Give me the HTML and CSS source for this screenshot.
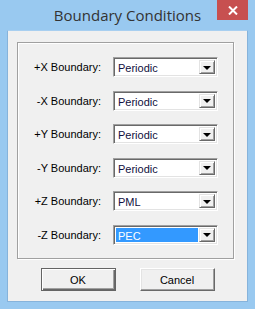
FILE: index.html
```html
<!DOCTYPE html>
<html lang="en">
<head>
    <meta charset="UTF-8">
    <title>Boundary Conditions</title>
    <link rel="stylesheet" href="styles.css">
</head>
<body>
    <div class="window">
        <div class="titlebar">
            <span></span>
            <span class="title">Boundary Conditions</span>
            <button class="close">
                <svg width="10" height="9" viewBox="0 0 10 9"><path d="M1 0.5 L9 8.5 M9 0.5 L1 8.5" stroke="#fff" stroke-width="2"/></svg>
            </button>
        </div>
        <div class="client">
            <div class="group">
                <label>+X Boundary:</label>
                <div class="combo"><span class="value">Periodic</span><span class="drop"><i></i></span></div>
                <label>-X Boundary:</label>
                <div class="combo"><span class="value">Periodic</span><span class="drop"><i></i></span></div>
                <label>+Y Boundary:</label>
                <div class="combo"><span class="value">Periodic</span><span class="drop"><i></i></span></div>
                <label>-Y Boundary:</label>
                <div class="combo"><span class="value">Periodic</span><span class="drop"><i></i></span></div>
                <label>+Z Boundary:</label>
                <div class="combo"><span class="value">PML</span><span class="drop"><i></i></span></div>
                <label>-Z Boundary:</label>
                <div class="combo"><span class="value selected">PEC</span><span class="drop"><i></i></span></div>
            </div>
            <div class="buttons">
                <button class="btn default">OK</button>
                <button class="btn">Cancel</button>
            </div>
        </div>
    </div>
</body>
</html>
```

FILE: styles.css
```css
body {
    margin: 0;
    font-family: 'Liberation Sans', Arial, sans-serif;
    font-size: 11px;
    color: #000;
}
.window {
    width: 255px;
    height: 309px;
    box-sizing: border-box;
    background-color: #99c9f0;
    padding: 0 7px 7px 7px;
    display: flex;
    flex-direction: column;
}
.titlebar {
    height: 30px;
    display: grid;
    grid-template-columns: 1fr auto 1fr;
    align-items: start;
}
.title {
    font-family: 'Open Sans', 'Noto Sans', sans-serif;
    font-size: 15px;
    color: #333;
    line-height: 15px;
    padding-top: 8px;
}
.close {
    justify-self: end;
    width: 31px;
    height: 20px;
    margin: 0;
    padding: 0;
    border: none;
    background-color: #c75050;
    display: flex;
    align-items: center;
    justify-content: center;
}
.client {
    flex: 1;
    background-color: #f0f0f0;
    border: 1px solid #86b3db;
    border-top-color: #a8cff0;
    padding: 11px 0 0 9px;
}
.group {
    width: 217px;
    height: 217px;
    box-sizing: border-box;
    border: 1px solid #a0a0a0;
    box-shadow: inset 1px 1px #fff, 1px 1px #fff;
    padding: 14px 0 0 0;
    display: grid;
    grid-template-columns: 83px 105px;
    column-gap: 12px;
    grid-auto-rows: 20px;
    row-gap: 13.5px;
    align-items: center;
}
.group label {
    text-align: right;
}
.combo {
    height: 20px;
    box-sizing: border-box;
    border: 1px solid;
    border-color: #a0a0a0 #fff #fff #a0a0a0;
    box-shadow: inset 1px 1px #696969, inset -1px -1px #e3e3e3;
    background-color: #fff;
    padding: 2px;
    display: flex;
}
.value {
    flex: 1;
    padding-left: 2px;
    line-height: 16px;
    color: #101040;
}
.value.selected {
    background-color: #3399ff;
    color: #fff;
    margin-right: 1px;
}
.drop {
    width: 16px;
    box-sizing: border-box;
    background-color: #f0f0f0;
    border: 1px solid;
    border-color: #e3e3e3 #696969 #696969 #e3e3e3;
    box-shadow: inset 1px 1px #fff, inset -1px -1px #a0a0a0;
    display: flex;
    align-items: center;
    justify-content: center;
}
.drop i {
    width: 0;
    height: 0;
    border-left: 4px solid transparent;
    border-right: 4px solid transparent;
    border-top: 4px solid #000;
    margin-top: 1px;
}
.buttons {
    display: flex;
    justify-content: center;
    gap: 24px;
    margin: 9px 0 0 -9px;
}
.btn {
    width: 75px;
    height: 23px;
    padding: 0;
    font-family: 'Liberation Sans', Arial, sans-serif;
    font-size: 11px;
    color: #000;
    background-color: #f0f0f0;
    border: 1px solid;
    border-color: #fff #696969 #696969 #fff;
    box-shadow: inset -1px -1px #a0a0a0, inset 1px 1px #e3e3e3;
}
.btn.default {
    border: 1px solid #646464;
    box-shadow: inset 1px 1px #fff, inset -1px -1px #696969, inset -2px -2px #a0a0a0;
}
```
